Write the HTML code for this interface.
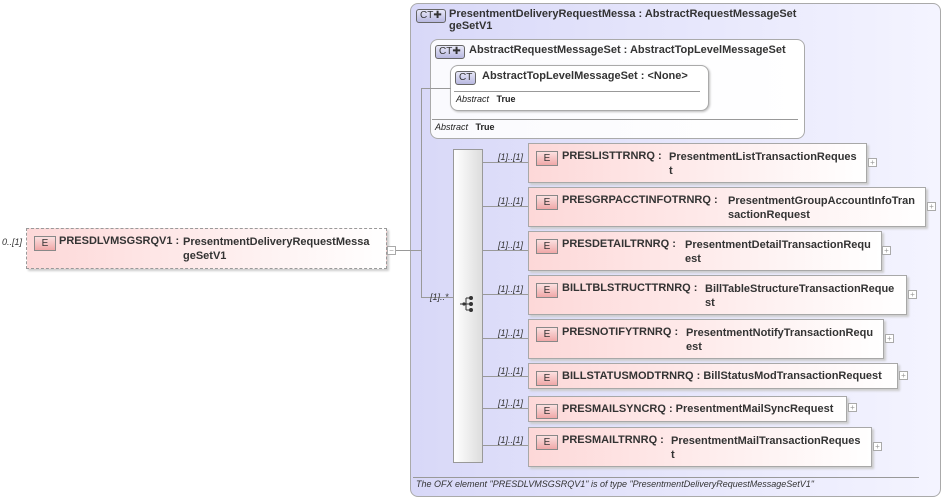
<!DOCTYPE html>
<html><head><style>
body{margin:0;width:943px;height:499px;background:#fff;position:relative;font-family:"Liberation Sans",sans-serif;overflow:hidden}
.a{position:absolute}
.el{position:absolute;border:1px solid #a8a8a8;background:linear-gradient(to right,#fdd8d8,#fff);box-shadow:2px 2px 2px #ccc;font-size:11px;font-weight:bold;color:#333}
.eb{position:absolute;left:7px;top:7px;width:20px;height:13px;border:1px solid #888;background:linear-gradient(#fbe0e0,#f0a8a8);font-size:10px;font-weight:normal;text-align:center;line-height:13px;color:#333}
.nm{position:absolute;top:6px;white-space:nowrap}
.ty{position:absolute;top:6px;line-height:14px;white-space:nowrap}
.pl{position:absolute;width:7px;height:7px;border:1px solid #aaa;background:#fff;font-size:8px;line-height:7px;text-align:center;color:#999;font-weight:normal}
.lb{position:absolute;font-size:9px;font-style:italic;color:#333}
.ln{position:absolute;background:#999}
.ct{position:absolute;height:12px;border:1px solid #666;border-radius:3px;background:linear-gradient(#e8e8f8,#b8b8e0);font-size:10px;line-height:12px;padding:0 3px;color:#333}
</style></head><body>
<div class="a" style="left:410px;top:3px;width:529px;height:492px;border:1px solid #aaa;border-radius:8px;background:linear-gradient(to right,#d8d8f8,#f4f4ff)"></div>
<div class="ct" style="left:416px;top:9px">CT✚</div>
<div class="a" style="left:449px;top:8px;font-size:11px;font-weight:bold;color:#333;line-height:12px">PresentmentDeliveryRequestMessa&nbsp;: AbstractRequestMessageSet<br>geSetV1</div>
<div class="a" style="left:430px;top:39px;width:373px;height:98px;border:1px solid #aaa;border-radius:8px;background:linear-gradient(to right,#fafafe,#fff)"></div>
<div class="ct" style="left:435px;top:45px">CT✚</div>
<div class="a" style="left:469px;top:44px;font-size:11px;font-weight:bold;color:#333">AbstractRequestMessageSet : AbstractTopLevelMessageSet</div>
<div class="ln" style="left:432px;top:119px;width:366px;height:1px"></div>
<div class="a" style="left:435px;top:122px;font-size:9px;color:#222"><i>Abstract</i>&nbsp;&nbsp;&nbsp;<b>True</b></div>
<div class="a" style="left:450px;top:65px;width:257px;height:44px;border:1px solid #aaa;border-radius:8px;background:#fff;box-shadow:1px 1px 2px #bbb"></div>
<div class="ct" style="left:455px;top:71px">CT</div>
<div class="a" style="left:482px;top:70px;font-size:11px;font-weight:bold;color:#333">AbstractTopLevelMessageSet : &lt;None&gt;</div>
<div class="ln" style="left:454px;top:91px;width:246px;height:1px"></div>
<div class="a" style="left:456px;top:94px;font-size:9px;color:#222"><i>Abstract</i>&nbsp;&nbsp;&nbsp;<b>True</b></div>
<div class="ln" style="left:386px;top:250px;width:35px;height:1px"></div>
<div class="ln" style="left:421px;top:88px;width:1px;height:210px"></div>
<div class="ln" style="left:421px;top:88px;width:30px;height:1px"></div>
<div class="ln" style="left:421px;top:297px;width:32px;height:1px"></div>
<div class="lb" style="left:430px;top:292px">[1]..*</div>
<div class="a" style="left:453px;top:149px;width:28px;height:312px;border:1px solid #999;background:linear-gradient(to right,#fff,#ddd)"></div>
<svg class="a" style="left:458px;top:294px" width="20" height="20"><path d="M2 10H8M8 4V16M8 4H12M8 10H12M8 16H12" stroke="#333" fill="none"/><circle cx="13" cy="4" r="2" fill="#333"/><circle cx="13" cy="10" r="2" fill="#333"/><circle cx="13" cy="16" r="2" fill="#333"/><circle cx="6" cy="10" r="1.6" fill="#333"/></svg>
<div class="lb" style="left:2px;top:237px">0..[1]</div>
<div class="el" style="left:26px;top:228px;width:359px;height:39px;border:1px dashed #999">
<div class="eb">E</div><div class="nm" style="left:32px">PRESDLVMSGSRQV1 :</div><div class="ty" style="left:156px">PresentmentDeliveryRequestMessa<br>geSetV1</div></div>
<div class="pl" style="left:387px;top:246px">−</div>

<div class="ln" style="left:482px;top:162px;width:46px;height:1px"></div><div class="lb" style="left:498px;top:152px">[1]..[1]</div>
<div class="el" style="left:528px;top:143px;width:337px;height:38px"><div class="eb">E</div><div class="nm" style="left:33px">PRESLISTTRNRQ :</div><div class="ty" style="left:140px">PresentmentListTransactionReques<br>t</div></div>
<div class="pl" style="left:868px;top:158px">+</div>

<div class="ln" style="left:482px;top:206px;width:46px;height:1px"></div><div class="lb" style="left:498px;top:196px">[1]..[1]</div>
<div class="el" style="left:528px;top:187px;width:396px;height:38px"><div class="eb">E</div><div class="nm" style="left:33px">PRESGRPACCTINFOTRNRQ :</div><div class="ty" style="left:199px">PresentmentGroupAccountInfoTran<br>sactionRequest</div></div>
<div class="pl" style="left:927px;top:202px">+</div>

<div class="ln" style="left:482px;top:250px;width:46px;height:1px"></div><div class="lb" style="left:498px;top:240px">[1]..[1]</div>
<div class="el" style="left:528px;top:231px;width:352px;height:38px"><div class="eb">E</div><div class="nm" style="left:33px">PRESDETAILTRNRQ :</div><div class="ty" style="left:156px">PresentmentDetailTransactionRequ<br>est</div></div>
<div class="pl" style="left:882px;top:246px">+</div>

<div class="ln" style="left:482px;top:294px;width:46px;height:1px"></div><div class="lb" style="left:498px;top:284px">[1]..[1]</div>
<div class="el" style="left:528px;top:275px;width:377px;height:38px"><div class="eb">E</div><div class="nm" style="left:33px">BILLTBLSTRUCTTRNRQ :</div><div class="ty" style="left:176px">BillTableStructureTransactionReque<br>st</div></div>
<div class="pl" style="left:908px;top:290px">+</div>

<div class="ln" style="left:482px;top:338px;width:46px;height:1px"></div><div class="lb" style="left:498px;top:328px">[1]..[1]</div>
<div class="el" style="left:528px;top:319px;width:354px;height:38px"><div class="eb">E</div><div class="nm" style="left:33px">PRESNOTIFYTRNRQ :</div><div class="ty" style="left:157px">PresentmentNotifyTransactionRequ<br>est</div></div>
<div class="pl" style="left:885px;top:334px">+</div>

<div class="ln" style="left:482px;top:376px;width:46px;height:1px"></div><div class="lb" style="left:498px;top:366px">[1]..[1]</div>
<div class="el" style="left:528px;top:363px;width:368px;height:24px"><div class="eb">E</div><div class="nm" style="left:33px">BILLSTATUSMODTRNRQ : BillStatusModTransactionRequest</div></div>
<div class="pl" style="left:899px;top:371px">+</div>

<div class="ln" style="left:482px;top:408px;width:46px;height:1px"></div><div class="lb" style="left:498px;top:398px">[1]..[1]</div>
<div class="el" style="left:528px;top:396px;width:317px;height:24px"><div class="eb">E</div><div class="nm" style="left:33px">PRESMAILSYNCRQ : PresentmentMailSyncRequest</div></div>
<div class="pl" style="left:848px;top:403px">+</div>

<div class="ln" style="left:482px;top:445px;width:46px;height:1px"></div><div class="lb" style="left:498px;top:435px">[1]..[1]</div>
<div class="el" style="left:528px;top:427px;width:342px;height:38px"><div class="eb">E</div><div class="nm" style="left:33px">PRESMAILTRNRQ :</div><div class="ty" style="left:142px">PresentmentMailTransactionReques<br>t</div></div>
<div class="pl" style="left:873px;top:442px">+</div>

<div class="ln" style="left:413px;top:477px;width:506px;height:1px"></div>
<div class="a" style="left:416px;top:479px;font-size:9px;font-style:italic;color:#333">The OFX element "PRESDLVMSGSRQV1" is of type "PresentmentDeliveryRequestMessageSetV1"</div>
</body></html>
